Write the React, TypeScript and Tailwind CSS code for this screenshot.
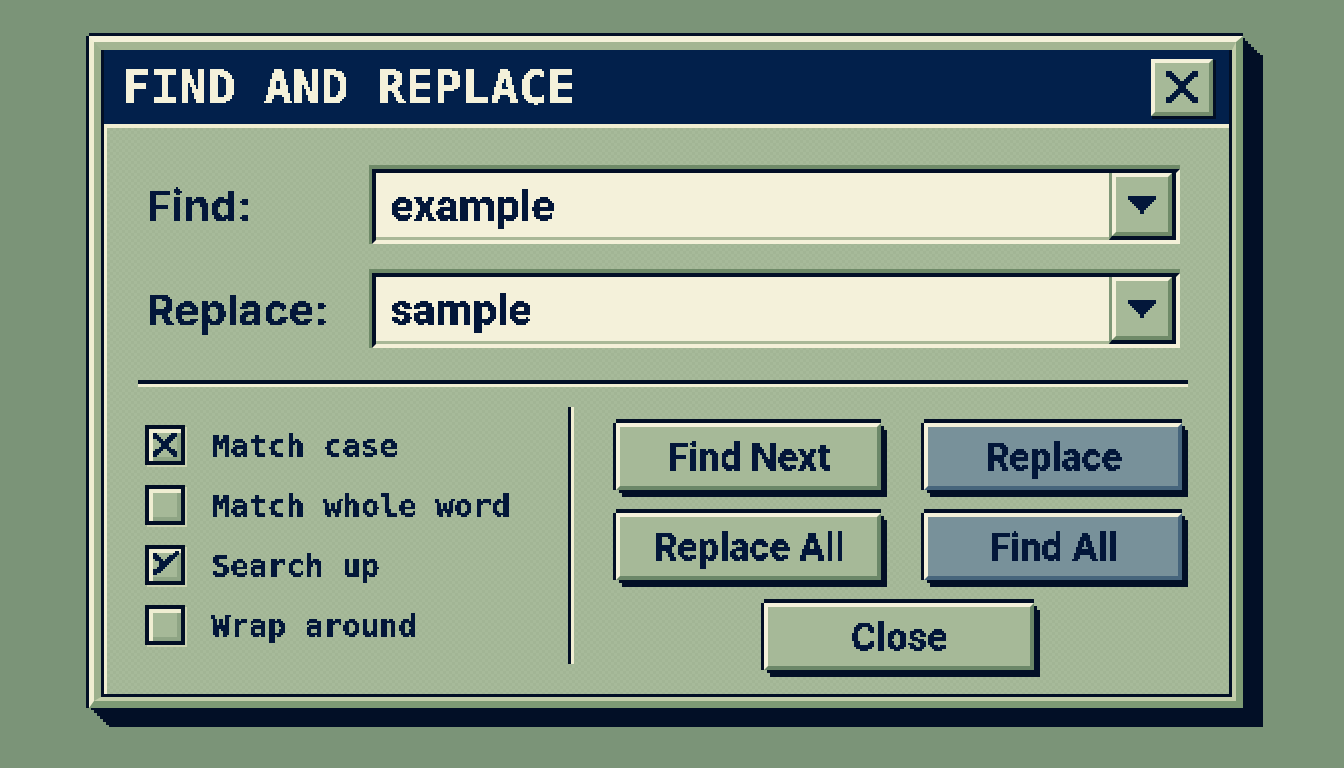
import { useState, type ReactNode } from 'react';

const options = [
  { id: 'match-case', label: 'Match case', mark: 'cross', checked: true },
  { id: 'whole-word', label: 'Match whole word', mark: 'check', checked: false },
  { id: 'search-up', label: 'Search up', mark: 'check', checked: true },
  { id: 'wrap-around', label: 'Wrap around', mark: 'check', checked: false },
];

const bitmaps: Record<string, string[]> = {
  close: [
    'XXX..........XXX',
    'XXXX........XXXX',
    'XXXXX......XXXXX',
    '..XXXX....XXXX..',
    '...XXXX..XXXX...',
    '....XXXXXXXX....',
    '.....XXXXXX.....',
    '......XXXX......',
    '......XXXX......',
    '.....XXXXXX.....',
    '....XXXXXXXX....',
    '...XXXX..XXXX...',
    '..XXXX....XXXX..',
    'XXXXX......XXXXX',
    'XXXX........XXXX',
    'XXX..........XXX',
  ],
  arrow: [
    'XXXXXXXXXXXXXX',
    'XXXXXXXXXXXXXX',
    '.XXXXXXXXXXXX.',
    '..XXXXXXXXXX..',
    '...XXXXXXXX...',
    '....XXXXXX....',
    '.....XXXX.....',
    '......XX......',
    '......XX......',
  ],
  cross: [
    '..............',
    '.XX.......XXX.',
    '.XXX.....XXXX.',
    '.XXXX...XXXX..',
    '...XXX.XXXX...',
    '....XXXXXX....',
    '.....XXXX.....',
    '.....XXXX.....',
    '....XXXXXX....',
    '..XXXX..XXXX..',
    '.XXXX....XXXX.',
    '.XXX......XXX.',
    '.XX........XX.',
    '..............',
  ],
  check: [
    '............XX',
    '.XX........XXX',
    '.XXX.....XXXX.',
    '.XXXX...XXXX..',
    '..XXXX.XXXX...',
    '....XXXXXX....',
    '....XXXXX.....',
    '....XXXX......',
    '...XXXX.......',
    '.XXXXX........',
    '.XXXX.........',
    '.XX...........',
    '..............',
    '..............',
  ],
};

function PixelIcon({ name, className }: { name: string; className: string }) {
  const rows = bitmaps[name];
  return (
    <svg
      viewBox={`0 0 ${rows[0].length} ${rows.length}`}
      className={className}
      fill="#03173a"
      shapeRendering="crispEdges"
      aria-hidden="true"
    >
      {rows.map((row, y) =>
        [...row].map((cell, x) => (cell === 'X' ? <rect key={`${x}-${y}`} x={x} y={y} width="1" height="1" /> : null)),
      )}
    </svg>
  );
}

// snaps text to 2px blocks
function PixelFilter() {
  return (
    <svg width="0" height="0" className="absolute" aria-hidden="true">
      <filter id="pixel" x="0" y="0" width="100%" height="100%" colorInterpolationFilters="sRGB">
        <feFlood x="0" y="0" width="1" height="1" floodColor="#000" result="px" />
        <feOffset in="px" x="0" y="0" width="2" height="2" result="cell" />
        <feTile in="cell" result="grid" />
        <feComposite in="SourceGraphic" in2="grid" operator="in" result="a" />
        <feOffset in="a" dx="1" dy="0" result="b" />
        <feOffset in="a" dx="0" dy="1" result="c" />
        <feOffset in="a" dx="1" dy="1" result="d" />
        <feMerge result="blocks">
          <feMergeNode in="a" />
          <feMergeNode in="b" />
          <feMergeNode in="c" />
          <feMergeNode in="d" />
        </feMerge>
        <feComponentTransfer in="blocks">
          <feFuncA type="discrete" tableValues="0 1 1" />
        </feComponentTransfer>
      </filter>
    </svg>
  );
}

function Field({ id, label, value, onChange }: { id: string; label: string; value: string; onChange: (v: string) => void }) {
  return (
    <div className="flex items-center px-2">
      <label htmlFor={id} className="w-[223px] shrink-0 font-['Inter',sans-serif] text-[43px] leading-[52px] [filter:url(#pixel)]">
        {label}
      </label>
      <div className="min-w-0 flex-1 border-t-4 border-l-[3px] border-[#6f8a68]">
        <div className="flex h-[75px] border-t-4 border-r-4 border-b-4 border-l-4 border-t-[#020f26] border-r-[#f4f0d8] border-b-[#f4f0d8] border-l-[#020f26] bg-[#f4f1da]">
          <div className="flex min-w-0 flex-1 border-b-[3px] border-[#a9b897]">
            <input
              id={id}
              type="text"
              value={value}
              onChange={(e) => onChange(e.target.value)}
              className="min-w-0 flex-1 px-3.5 text-[43px] leading-[52px] outline-none [filter:url(#pixel)]"
            />
          </div>
          <div className="border-r-4 border-b-4 border-l-[3px] border-r-[#020f26] border-b-[#020f26] border-l-[#7f9877]">
            <button
              type="button"
              aria-label={`${label} history`}
              className="flex h-full w-[60px] items-center justify-center border-4 border-t-[#f4f1da] border-r-[#6f8a68] border-b-[#6f8a68] border-l-[#f4f1da] bg-[#a6b998]"
            >
              <PixelIcon name="arrow" className="h-[18px] w-7" />
            </button>
          </div>
        </div>
      </div>
    </div>
  );
}

function ActionButton({ children, blue, className = '' }: { children: ReactNode; blue?: boolean; className?: string }) {
  return (
    <button
      type="button"
      className={`h-[67px] border-4 border-t-[#f4f1da] border-l-[#f4f1da] text-[38px] leading-[44px] font-bold shadow-[-3px_0_0_#020f26,0_-4px_0_#020f26,3px_3px_0_#020f26,6px_7px_0_#020f26] ${
        blue ? 'border-r-[#46657c] border-b-[#46657c] bg-[#78919a]' : 'border-r-[#6b8768] border-b-[#6b8768] bg-[#a6b998]'
      } ${className}`}
    >
      <span className="block [filter:url(#pixel)]">{children}</span>
    </button>
  );
}

export default function App() {
  const [find, setFind] = useState('example');
  const [replace, setReplace] = useState('sample');

  return (
    <main className="min-h-screen bg-[#7b9478] pt-9 pr-[101px] pb-[60px] pl-[89px] font-['Roboto',sans-serif] font-bold text-[#03173a]">
      <PixelFilter />
      <section
        aria-labelledby="dialog-title"
        className="border-t-[6px] border-r-[7px] border-b-[7px] border-l-[5px] border-t-[#f4f1da] border-r-[#7d9a74] border-b-[#7d9a74] border-l-[#f0eed2] shadow-[-3px_0_0_#020f26,0_-3px_0_#020f26,2px_2px_0_#020f26,5px_5px_0_#020f26,8px_8px_0_#020f26,11px_11px_0_#020f26,14px_14px_0_#020f26,17px_17px_0_#020f26,20px_19px_0_#020f26]"
      >
        <div className="border-t-8 border-r-4 border-b-4 border-l-[7px] border-t-[#a3b592] border-r-[#c3ceaa] border-b-[#c3ceaa] border-l-[#9cb08c]">
          <div className="border-r-[3px] border-b-[3px] border-l-[3px] border-[#020f26]">
            <header className="flex h-[74px] items-center justify-between bg-[#02204b] pr-4 pl-[18px]">
              <h1
                id="dialog-title"
                className="font-['DejaVu_Sans_Mono',monospace] text-[47px] leading-[56px] text-[#f4f1da] [filter:url(#pixel)]"
              >
                FIND AND REPLACE
              </h1>
              <button
                type="button"
                aria-label="Close"
                className="flex h-[57px] w-[62px] items-center justify-center border-4 border-t-[#f4f1da] border-r-[#738c6c] border-b-[#738c6c] border-l-[#f4f1da] bg-[#a6b998] shadow-[2px_2px_0_1px_#020f26]"
              >
                <PixelIcon name="close" className="h-8 w-8" />
              </button>
            </header>

            <div className="border-t-4 border-l-[3px] border-[#f0eed2] bg-[#a7ba9a] bg-[repeating-conic-gradient(#a2b595_0_25%,#a7ba9a_0_50%)] bg-size-[6px_6px] pt-[37px] pr-[41px] pb-[30px] pl-[31px]">
              <div className="flex flex-col gap-[25px]">
                <Field id="find" label="Find:" value={find} onChange={setFind} />
                <Field id="replace" label="Replace:" value={replace} onChange={setReplace} />
              </div>

              <hr className="mt-8 mb-5 h-[7px] border-t-4 border-b-[3px] border-t-[#020f26] border-b-[#f0eed2]" />

              <div className="grid grid-cols-[430fr_6px_614fr]">
                <div className="flex flex-col gap-5 pt-[18px] pl-[7px]">
                  {options.map((option) => (
                    <label
                      key={option.id}
                      className="flex h-10 items-center gap-[26px] font-['DejaVu_Sans_Mono',monospace] text-[31px] leading-10 whitespace-nowrap"
                    >
                      <span className="grid place-items-center shadow-[2px_2px_0_#ccd3b2]">
                        <input
                          type="checkbox"
                          defaultChecked={option.checked}
                          className="peer col-start-1 row-start-1 h-10 w-10 appearance-none border-4 border-[#020f26] bg-[#a6b998] shadow-[inset_4px_4px_0_#f0eed2,inset_-4px_-4px_0_#8fa585]"
                        />
                        <PixelIcon
                          name={option.mark}
                          className="pointer-events-none invisible col-start-1 row-start-1 h-7 w-7 peer-checked:visible"
                        />
                      </span>
                      <span className="[filter:url(#pixel)]">{option.label}</span>
                    </label>
                  ))}
                </div>

                <div className="border-r-[3px] border-l-[3px] border-r-[#f0eed2] border-l-[#020f26]" />

                <div className="-mb-1.5 grid grid-cols-[265fr_258fr] gap-x-[43px] gap-y-[23px] pt-4 pr-[6px] pl-[42px]">
                  <ActionButton>Find Next</ActionButton>
                  <ActionButton blue>Replace</ActionButton>
                  <ActionButton>Replace All</ActionButton>
                  <ActionButton blue>Find All</ActionButton>
                  <ActionButton className="col-span-2 w-[270px] justify-self-center">Close</ActionButton>
                </div>
              </div>
            </div>
          </div>
        </div>
      </section>
    </main>
  );
}
